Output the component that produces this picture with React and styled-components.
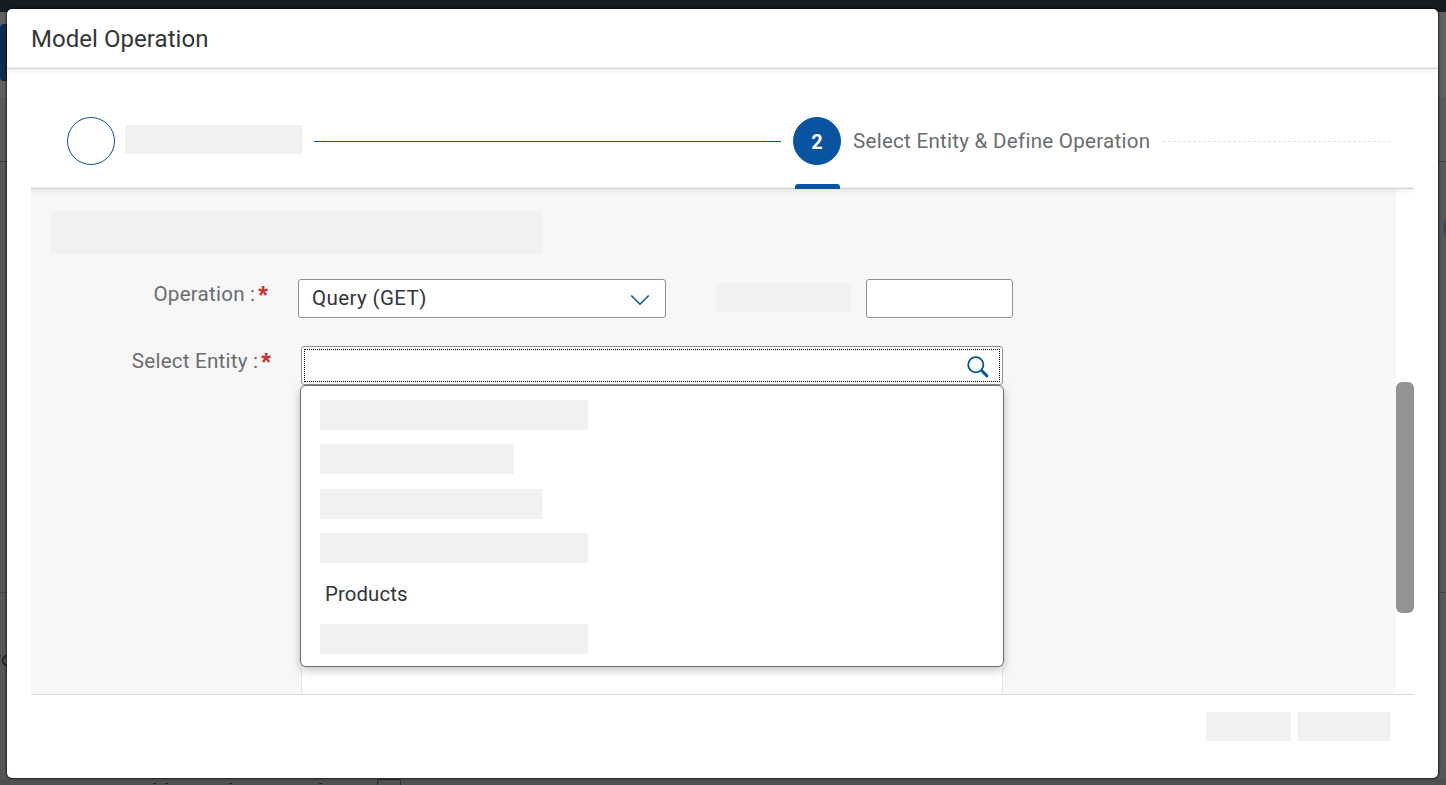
import React from "react";
import styled, { createGlobalStyle } from "styled-components";

const Global = createGlobalStyle`
  *, *::before, *::after { box-sizing: border-box; }
  html, body { margin: 0; height: 100%; overflow: hidden; }
  body { font-family: Roboto, "Liberation Sans", sans-serif; color: #32363a; }
`;

const Page = styled.div`
  position: relative;
  display: flex;
  flex-direction: column;
  height: 785px;
  overflow: hidden;
  background: #505050;
`;

const ShellBar = styled.div`
  flex: none;
  height: 12px;
  background: #141c24;
`;

const PageBand = styled.div`
  flex: none;
  height: ${(p) => p.$height}px;
  padding-top: ${(p) => p.$top || 0}px;
  background: ${(p) => p.$bg};
  border-bottom: ${(p) => (p.$line ? `1px solid ${p.$line}` : "0")};
  display: flex;
  justify-content: space-between;
  align-items: flex-start;
  overflow: hidden;
`;

const PageTile = styled.div`
  width: 24px;
  height: 57px;
  border-radius: 4px;
  background: #0e2c4d;
`;

const PageKnob = styled.div`
  width: 30px;
  height: 30px;
  margin-right: -27px;
  border-radius: 50%;
  background: #3d4852;
`;

const PageText = styled.div`
  margin-left: -6px;
  font-size: 21px;
  line-height: 24px;
  color: #222426;
`;

const PageFooter = styled.div`
  display: flex;
  padding-left: 153px;
`;

const PageTick = styled.div`
  width: 3px;
  height: 1px;
  margin: 4px ${(p) => p.$after}px 0 0;
  background: #222426;
`;

const PageCheck = styled.div`
  width: 24px;
  height: 24px;
  border: 1px solid #2b2d30;
  border-radius: 2px;
`;

const Dialog = styled.section`
  position: absolute;
  left: 7px;
  top: 9px;
  width: 1431px;
  height: 769px;
  display: flex;
  flex-direction: column;
  background: #fff;
  border-radius: 5px;
  box-shadow: 0 0 2px 1px rgba(0, 0, 0, 0.65);
`;

const DialogHeader = styled.header`
  flex: none;
  height: 60px;
  padding: 16px 24px 0;
  border-bottom: 1px solid #d8d8d8;
  border-radius: 5px 5px 0 0;
  box-shadow: inset 0 -1px 0 #ececec, 0 2px 4px rgba(0, 0, 0, 0.08);
  clip-path: inset(0 0 -8px 0);
`;

const Title = styled.h1`
  margin: 0;
  font-size: 24px;
  line-height: 28px;
  font-weight: 400;
  letter-spacing: 0.05px;
`;

const DialogBody = styled.div`
  flex: none;
  display: flex;
  flex-direction: column;
  margin: 0 24px;
  height: 626px;
  border-bottom: 1px solid #d9d9d9;
`;

const Steps = styled.nav`
  position: relative;
  z-index: 1;
  flex: none;
  display: flex;
  align-items: center;
  height: 120px;
  padding: 24px 24px 0 36px;
  border-bottom: 1px solid #d8d8d8;
  box-shadow: inset 0 -1px 0 #ececec, 0 2px 4px rgba(0, 0, 0, 0.08);
  clip-path: inset(0 0 -8px 0);
`;

const StepDot = styled.div`
  position: relative;
  flex: none;
  display: flex;
  align-items: center;
  justify-content: center;
  width: 48px;
  height: 48px;
  padding-top: 2px;
  border: 1px solid #0854a0;
  border-radius: 50%;
  background: ${(p) => (p.$active ? "#0854a0" : "#fff")};
  color: #fff;
  font-size: 20px;
  font-weight: 700;
`;

const ActiveMark = styled.span`
  position: absolute;
  left: 1px;
  top: 66px;
  width: 45px;
  height: 5px;
  border-radius: 3px 3px 0 0;
  background: #0854a0;
`;

const StepLabel = styled.div`
  flex: none;
  width: 298px;
  margin-left: 12px;
  font-size: 20.6px;
  line-height: 24px;
  letter-spacing: 0.25px;
  white-space: nowrap;
  color: #6a6d70;
`;

const StepLine = styled.div`
  flex: none;
  width: ${(p) => p.$width}px;
  height: 1px;
  margin: 1px 12px 0 12px;
  background: ${(p) =>
    p.$dashed ? "repeating-linear-gradient(90deg, #e5e5e5 0 3px, transparent 3px 5px)" : "#0854a0"};
`;

const Placeholder = styled.div`
  flex: none;
  width: ${(p) => p.$w}px;
  height: ${(p) => p.$h}px;
  margin: ${(p) => p.$m || "0"};
  background: #f1f1f1;
`;

const ScrollArea = styled.div`
  flex: 1;
  min-height: 0;
  display: flex;
`;

const Form = styled.main`
  width: 1365px;
  padding: 22px 20px 0;
  background: #f7f7f7;
  overflow: hidden;
`;

const ScrollTrack = styled.div`
  width: 18px;
  padding-top: 193px;
`;

const ScrollThumb = styled.div`
  height: 231px;
  border-radius: 6px;
  background: #949494;
`;

const FormRow = styled.div`
  display: flex;
  align-items: flex-start;
  margin-top: ${(p) => p.$gap}px;
`;

const Label = styled.label`
  flex: none;
  display: flex;
  justify-content: flex-end;
  width: ${(p) => p.$width}px;
  margin-right: 30px;
  padding-top: 3px;
  font-size: 20.6px;
  line-height: 24px;
  letter-spacing: 0.22px;
  white-space: pre;
  color: #6a6d70;
`;

const Required = styled.span`
  margin: -1px 0 0 3px;
  font-family: "Liberation Sans", sans-serif;
  font-size: 25px;
  line-height: 28px;
  font-weight: 700;
  letter-spacing: 0;
  color: #cc3333;
`;

const Field = styled.div`
  flex: none;
  display: flex;
  align-items: center;
  justify-content: space-between;
  width: ${(p) => p.$width}px;
  height: 39px;
  padding: 0 15px 0 13px;
  border: 1px solid #89919a;
  border-radius: 3px;
  background: #fff;
  font-size: 20.6px;
  letter-spacing: 0.35px;
`;

const FieldText = styled.span`
  margin-top: -2px;
`;

const EntityColumn = styled.div`
  position: relative;
  width: 702px;
  height: 350px;
`;

const SearchField = styled(Field)`
  padding: 2px;
`;

const FocusFrame = styled.div`
  flex: 1;
  height: 33px;
  display: flex;
  align-items: center;
  justify-content: flex-end;
  padding: 2px 10px 0 0;
  border: 1px dotted #000;
`;

const EntityPanel = styled.div`
  height: 311px;
  border: 1px solid #e5e5e5;
  background: #fff;
`;

const Suggestions = styled.div`
  position: absolute;
  left: -1px;
  top: 39px;
  width: 704px;
  height: 282px;
  padding: 14px 19px 0;
  border: 1px solid #6d6d6d;
  border-radius: 6px;
  background: #fff;
  box-shadow: 0 3px 10px rgba(0, 0, 0, 0.25);
`;

const Option = styled.div`
  height: 31px;
  margin-top: 15px;
  padding-left: 5px;
  font-size: 20.4px;
  line-height: 33px;
  letter-spacing: 0.1px;
  color: #32363a;
`;

const DialogFooter = styled.footer`
  display: flex;
  justify-content: flex-end;
  gap: 7px;
  padding: 17px 48px 0 0;
`;

const ChevronIcon = () => (
  <svg width="20" height="14" viewBox="0 0 20 14" fill="none" stroke="#0854a0" strokeWidth="1.6">
    <path d="M1.3 3.5 10 12.2 18.7 3.5" />
  </svg>
);

const SearchIcon = () => (
  <svg width="22" height="22" viewBox="0 0 22 22" fill="none" stroke="#0854a0" strokeLinecap="round">
    <circle cx="8.8" cy="8.8" r="7.6" strokeWidth="1.8" />
    <path d="m14.8 14.8 5.1 5.1" strokeWidth="2.9" />
  </svg>
);

export default function App() {
  return (
    <Page>
      <Global />
      <ShellBar />
      <PageBand $height={87} $top={12} $bg="#606060" $line="#555555">
        <PageTile />
      </PageBand>
      <PageBand $height={63} $bg="#5a5a5a" $line="#3c3c3c" />
      <PageBand $height={431} $top={51} $bg="#575757" $line="#444444">
        <span />
        <PageKnob />
      </PageBand>
      <PageBand $height={186} $top={54} $bg="#565656">
        <PageText>ro</PageText>
      </PageBand>
      <PageFooter>
        <PageTick $after={9} />
        <PageTick $after={61} />
        <PageTick $after={87} />
        <PageTick $after={55} />
        <PageCheck />
      </PageFooter>

      <Dialog>
        <DialogHeader>
          <Title>Model Operation</Title>
        </DialogHeader>
        <DialogBody>
          <Steps>
            <StepDot />
            <Placeholder $w={177} $h={29} $m="-3px 0 0 10px" />
            <StepLine $width={467} />
            <StepDot $active>
              2<ActiveMark />
            </StepDot>
            <StepLabel>Select Entity &amp; Define Operation</StepLabel>
            <StepLine $width={227} $dashed />
          </Steps>
          <ScrollArea>
            <Form>
              <Placeholder $w={491} $h={43} />
              <FormRow $gap={25}>
                <Label $width={217}>
                  Operation :<Required>*</Required>
                </Label>
                <Field $width={368}>
                  <FieldText>Query (GET)</FieldText>
                  <ChevronIcon />
                </Field>
                <Placeholder $w={135} $h={29} $m="4px 15px 0 50px" />
                <Field $width={147} />
              </FormRow>
              <FormRow $gap={28}>
                <Label $width={220}>
                  Select Entity :<Required>*</Required>
                </Label>
                <EntityColumn>
                  <SearchField $width={702}>
                    <FocusFrame>
                      <SearchIcon />
                    </FocusFrame>
                  </SearchField>
                  <EntityPanel />
                  <Suggestions>
                    <Placeholder $w={268} $h={30} />
                    <Placeholder $w={194} $h={30} $m="14px 0 0" />
                    <Placeholder $w={222} $h={30} $m="15px 0 0" />
                    <Placeholder $w={268} $h={30} $m="14px 0 0" />
                    <Option>Products</Option>
                    <Placeholder $w={268} $h={30} $m="15px 0 0" />
                  </Suggestions>
                </EntityColumn>
              </FormRow>
            </Form>
            <ScrollTrack>
              <ScrollThumb />
            </ScrollTrack>
          </ScrollArea>
        </DialogBody>
        <DialogFooter>
          <Placeholder $w={85} $h={29} />
          <Placeholder $w={92} $h={29} />
        </DialogFooter>
      </Dialog>
    </Page>
  );
}
